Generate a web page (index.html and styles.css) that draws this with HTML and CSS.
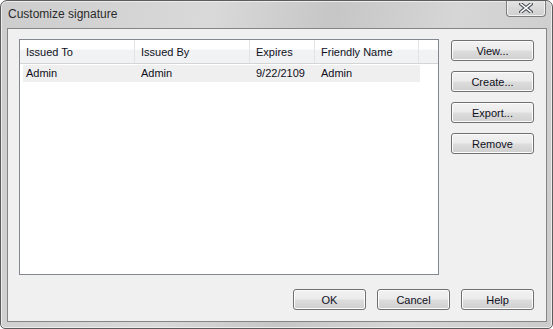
FILE: index.html
```html
<!DOCTYPE html>
<html lang="en">
<head>
  <meta charset="UTF-8" />
  <title>Customize signature</title>
  <link rel="stylesheet" href="styles.css">
</head>
<body>
  <!-- Dialog window -->
  <div class="window">
    <div class="titlebar">
      <span class="title">Customize signature</span>
      <div class="close-btn">
        <svg width="14" height="10" viewBox="0 0 14 10">
          <path d="M2 1 L12 9 M12 1 L2 9" stroke="#4a4f5a" stroke-width="3.6" stroke-linecap="square"/>
          <path d="M2 1 L12 9 M12 1 L2 9" stroke="#fff" stroke-width="1.6" stroke-linecap="square"/>
        </svg>
      </div>
    </div>

    <div class="client">
      <div class="top-row">
        <!-- Certificate list -->
        <div class="list">
          <div class="list-header">
            <div class="col c1">Issued To</div>
            <div class="col c2">Issued By</div>
            <div class="col c3">Expires</div>
            <div class="col c4">Friendly Name</div>
            <div class="col c5"></div>
          </div>
          <div class="list-row">
            <div class="cell c1">Admin</div>
            <div class="cell c2">Admin</div>
            <div class="cell c3">9/22/2109</div>
            <div class="cell c4">Admin</div>
          </div>
        </div>

        <!-- Side buttons -->
        <div class="side-buttons">
          <button class="btn">View...</button>
          <button class="btn">Create...</button>
          <button class="btn">Export...</button>
          <button class="btn">Remove</button>
        </div>
      </div>

      <div class="bottom-row">
        <button class="btn wide">OK</button>
        <button class="btn wide">Cancel</button>
        <button class="btn wide">Help</button>
      </div>
    </div>
  </div>
</body>
</html>
```

FILE: styles.css
```css
/* ====== Page ====== */
body {
  margin: 0;
  padding: 0;
  background: #fff;
  font-family: "Liberation Sans", Arial, sans-serif;
  font-size: 11px;
  color: #10101c;
}

/* ====== Window frame ====== */
.window {
  width: 553px;
  height: 329px;
  box-sizing: border-box;
  border: 1px solid #5c5c5c;
  border-radius: 7px 7px 5px 5px;
  background: linear-gradient(100deg, #cdcdcd 0%, #d9d9d9 35%, #c6c6c6 55%, #d6d6d6 75%, #cbcbcb 100%);
  box-shadow: inset 0 0 0 1px #ececec;
  display: flex;
  flex-direction: column;
  overflow: hidden;
}

.titlebar {
  position: relative;
  height: 27px;
  flex: none;
}
.title {
  position: absolute;
  left: 7px;
  top: 6px;
  font-size: 12px;
  color: #2b2b2b;
}
.close-btn {
  position: absolute;
  right: 6px;
  top: -1px;
  width: 40px;
  height: 17px;
  box-sizing: border-box;
  border: 1px solid #7d7d7d;
  border-top: none;
  border-radius: 0 0 4px 4px;
  background: linear-gradient(#e4e4e4, #cfcfcf);
  box-shadow: inset 0 0 0 1px #f2f2f2;
  display: flex;
  align-items: center;
  justify-content: center;
}

/* ====== Client area ====== */
.client {
  flex: 1;
  margin: 0 5px 6px 6px;
  border: 1px solid #858585;
  background: #f0f0f0;
  padding: 10px 12px 11px 11px;
  display: flex;
  flex-direction: column;
}

.top-row {
  display: flex;
  gap: 12px;
}

/* ====== List view ====== */
.list {
  width: 420px;
  height: 236px;
  box-sizing: border-box;
  border: 1px solid #828790;
  background: #fff;
}
.list-header {
  display: flex;
  height: 23px;
  background: linear-gradient(#fff 0%, #fff 40%, #f1f2f4 45%, #f1f2f4 100%);
  border-bottom: 1px solid #d5d5d5;
}
.col {
  box-sizing: border-box;
  padding: 6px 0 0 6px;
  border-right: 1px solid #e2e3e5;
}
.c1 { width: 115px; }
.c2 { width: 115px; }
.c3 { width: 65px; }
.c4 { width: 104px; }
.c5 { width: 18px; border-right: none; }

.list-row {
  display: flex;
  height: 17px;
  margin: 1px 0 0 3px;
  width: 397px;
  background: #efefef;
}
.cell {
  box-sizing: border-box;
  padding: 2px 0 0 6px;
}
.list-row .c1 { width: 112px; padding-left: 3px; }

/* ====== Buttons ====== */
.side-buttons {
  display: flex;
  flex-direction: column;
  gap: 10px;
  padding-top: 1px;
}
.btn {
  width: 83px;
  height: 21px;
  box-sizing: border-box;
  border: 1px solid #707070;
  border-radius: 3px;
  background: linear-gradient(#f2f2f2 0%, #ebebeb 48%, #dddddd 52%, #cfcfcf 100%);
  box-shadow: inset 0 0 0 1px #fcfcfc;
  font-family: "Liberation Sans", Arial, sans-serif;
  font-size: 11px;
  color: #10101c;
  padding: 0;
}
.btn.wide { width: 73px; }

.bottom-row {
  margin-top: auto;
  display: flex;
  justify-content: flex-end;
  gap: 11px;
}
```
